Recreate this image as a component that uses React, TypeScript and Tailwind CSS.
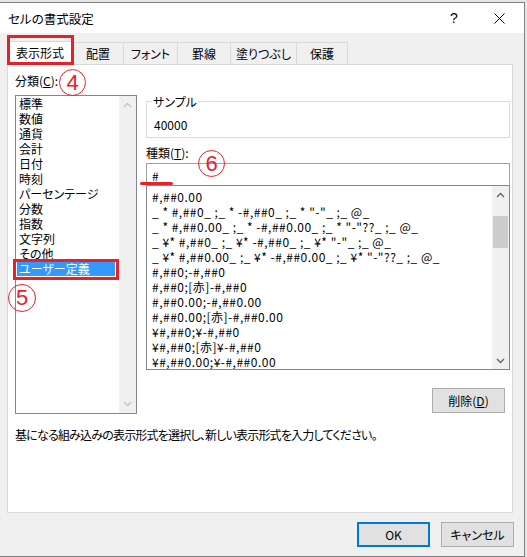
import React from 'react';

const FONT = "[font-family:'Noto_Sans_CJK_JP','Noto_Sans',sans-serif] [font-feature-settings:'palt']";

const categories = [
  '標準',
  '数値',
  '通貨',
  '会計',
  '日付',
  '時刻',
  'パーセンテージ',
  '分数',
  '指数',
  '文字列',
  'その他',
  'ユーザー定義',
];

const formats = [
  '#,##0.00',
  '_ * #,##0_ ;_ * -#,##0_ ;_ * "-"_ ;_ @_',
  '_ * #,##0.00_ ;_ * -#,##0.00_ ;_ * "-"??_ ;_ @_',
  '_ ¥* #,##0_ ;_ ¥* -#,##0_ ;_ ¥* "-"_ ;_ @_',
  '_ ¥* #,##0.00_ ;_ ¥* -#,##0.00_ ;_ ¥* "-"??_ ;_ @_',
  '#,##0;-#,##0',
  '#,##0;[赤]-#,##0',
  '#,##0.00;-#,##0.00',
  '#,##0.00;[赤]-#,##0.00',
  '¥#,##0;¥-#,##0',
  '¥#,##0;[赤]¥-#,##0',
  '¥#,##0.00;¥-#,##0.00',
];

const tabs = ['表示形式', '配置', 'フォント', '罫線', '塗りつぶし', '保護'];
const tabWidths = ['w-[66px]', 'w-[51px]', 'w-[54px]', 'w-[53px]', 'w-[66px]', 'w-[51px]'];

function Chevron({ up, color }: { up?: boolean; color: string }) {
  return (
    <svg width="9" height="6" viewBox="0 0 9 6">
      <polyline
        points={up ? '1,5 4.5,1.5 8,5' : '1,1 4.5,4.5 8,1'}
        fill="none"
        stroke={color}
        strokeWidth="1.3"
      />
    </svg>
  );
}

function Circled({ n, className }: { n: string; className: string }) {
  return (
    <div
      className={`absolute z-20 flex items-center justify-center rounded-full border border-[#e8202a] text-[#e8202a] [font-family:'Liberation_Sans',Arial,sans-serif] text-[22px] leading-none ${className}`}
    >
      {n}
    </div>
  );
}

export default function App() {
  return (
    <div className={`relative w-[527px] h-[557px] overflow-hidden bg-[#e6e6e6] pt-[2px] text-[12px] leading-[15px] text-black ${FONT}`}>
      <div className="w-[525px] h-[555px] border-t border-r border-b border-[#7f7f7f] bg-[#f0f0f0] flex flex-col">
        {/* title bar */}
        <div className="h-[30px] bg-white flex items-center shrink-0">
          <span className="pl-[8px] text-[12.5px]">セルの書式設定</span>
          <div className="ml-auto flex items-center h-full">
            <div className="w-[44px] h-full flex items-center justify-center text-[14px] [font-family:'Liberation_Sans',sans-serif]">
              ?
            </div>
            <div className="w-[46px] h-full flex items-center justify-center mr-[2px]">
              <svg width="11" height="11" viewBox="0 0 11 11">
                <path d="M0.5 0.5 L10.5 10.5 M10.5 0.5 L0.5 10.5" stroke="#000" strokeWidth="1" />
              </svg>
            </div>
          </div>
        </div>

        {/* body */}
        <div className="flex-1 flex flex-col pl-[7px]">
          {/* tabs */}
          <div className="mt-[7px] h-[24px] flex items-end">
            {tabs.map((t, i) => (
              <div
                key={t}
                className={`${tabWidths[i]} flex items-center justify-center border-t border-r border-[#d9d9d9] ${
                  i === 0
                    ? 'h-[24px] bg-white border-l relative z-10 -mb-px pb-[2px]'
                    : 'h-[22px] bg-[#f0f0f0]'
                }`}
              >
                {t}
              </div>
            ))}
          </div>

          {/* panel */}
          <div className="w-[506px] h-[449px] border border-[#d9d9d9] bg-white flex flex-col pl-[7px]">
            <div className="flex">
              {/* left column */}
              <div className="w-[122px] flex flex-col">
                <div className="mt-[8px] h-[15px]">
                  分類(<span className="underline">C</span>):
                </div>
                <div className="mt-[7px] h-[319px] border border-[#828790] flex">
                  <div className="flex-1 flex flex-col pl-px">
                    {categories.map((c) => (
                      <div
                        key={c}
                        className={`h-[15px] pl-[2px] whitespace-nowrap ${
                          c === 'ユーザー定義' ? 'bg-[#3399ff] text-white w-[98px]' : ''
                        }`}
                      >
                        {c}
                      </div>
                    ))}
                  </div>
                  <div className="w-[17px] bg-[#f0f0f0] flex flex-col justify-between items-center py-[6px]">
                    <Chevron up color="#c3c3c3" />
                    <Chevron color="#c3c3c3" />
                  </div>
                </div>
              </div>

              {/* right column */}
              <div className="ml-[9px] w-[364px] flex flex-col">
                <fieldset className="mt-[29px] h-[44px] border border-[#dcdcdc] pl-[5px]">
                  <legend className="px-px leading-[15px]">サンプル</legend>
                  <div className="mt-[8px] ml-[2px]">40000</div>
                </fieldset>
                <div className="mt-[7px] h-[15px]">
                  種類(<span className="underline">T</span>):
                </div>
                <div className="mt-[3px] h-[22px] border border-[#a0a0a0] border-b-0 flex items-center pl-[5px] pt-[2px]">
                  #
                </div>
                <div className="h-[185px] border border-[#828790] flex">
                  <div className="flex-1 flex flex-col pl-[5px] pt-[3px] overflow-hidden tracking-[0.5px]">
                    {formats.map((f, i) => (
                      <div key={i} className="h-[15px] whitespace-pre">
                        {f}
                      </div>
                    ))}
                  </div>
                  <div className="w-[17px] bg-[#f0f0f0] flex flex-col items-center">
                    <div className="h-[17px] flex items-center justify-center">
                      <Chevron up color="#606060" />
                    </div>
                    <div className="mt-[13px] w-[15px] h-[32px] bg-[#cdcdcd]" />
                    <div className="mt-auto h-[17px] flex items-center justify-center">
                      <Chevron color="#606060" />
                    </div>
                  </div>
                </div>
                <div className="mt-[18px] self-end mr-[5px] w-[73px] h-[25px] border border-[#adadad] bg-[#e1e1e1] flex items-center justify-center">
                  削除(<span className="underline">D</span>)
                </div>
              </div>
            </div>
            <div className="mt-[13px] tracking-[-0.8px]">
              基になる組み込みの表示形式を選択し、新しい表示形式を入力してください。
            </div>
          </div>

          {/* buttons */}
          <div className="mt-[9px] flex justify-end gap-[11px] pr-[10px]">
            <div className="w-[73px] h-[25px] border-2 border-[#0078d7] bg-[#e1e1e1] flex items-center justify-center">
              OK
            </div>
            <div className="w-[73px] h-[25px] border border-[#adadad] bg-[#e1e1e1] flex items-center justify-center">
              キャンセル
            </div>
          </div>
        </div>
      </div>

      {/* annotations */}
      <div className="absolute z-20 left-[7px] top-[35px] w-[67px] h-[30px] border-[3px] border-[#e8202a]" />
      <div className="absolute z-20 left-[13px] top-[259px] w-[106px] h-[21px] border-[3px] border-[#e8202a]" />
      <div className="absolute z-20 left-[140px] top-[182px] w-[33px] h-[3px] rounded-full bg-[#e8202a]" />
      <Circled n="4" className="left-[59px] top-[69px] w-[27px] h-[27px]" />
      <Circled n="5" className="left-[8px] top-[284px] w-[28px] h-[28px]" />
      <Circled n="6" className="left-[198px] top-[150px] w-[27px] h-[27px]" />
    </div>
  );
}
